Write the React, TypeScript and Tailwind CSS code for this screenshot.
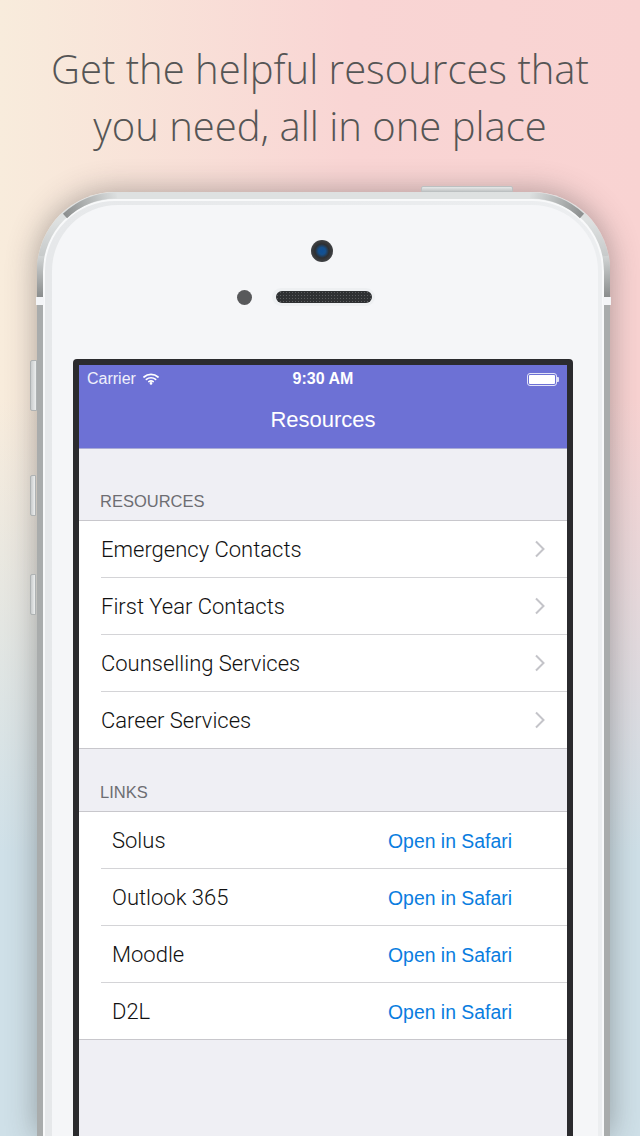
const resources = ["Emergency Contacts", "First Year Contacts", "Counselling Services", "Career Services"];
const links = ["Solus", "Outlook 365", "Moodle", "D2L"];

function Wifi() {
  return (
    <svg width="16" height="12" viewBox="0 0 16 12" fill="none" stroke="white" strokeWidth="1.7" strokeLinecap="round">
      <path d="M1 4 C5 0.4 11 0.4 15 4" />
      <path d="M3.4 6.4 C6 4.2 10 4.2 12.6 6.4" />
      <path d="M5.8 8.6 C7 7.7 9 7.7 10.2 8.6" />
      <circle cx="8" cy="10.4" r="1.3" fill="white" stroke="none" />
    </svg>
  );
}

function Battery() {
  return (
    <div className="flex items-center">
      <div className="w-[30px] h-[13px] rounded-[3px] border border-white/80 p-px">
        <div className="w-full h-full bg-white rounded-[1px]" />
      </div>
      <div className="w-[2px] h-[5px] bg-white/80 rounded-r-[1px]" />
    </div>
  );
}

function Chevron() {
  return (
    <svg width="12" height="18" viewBox="0 0 12 18" fill="none" stroke="#c4c4c9" strokeWidth="2">
      <path d="M2 1.5 L9.5 9 L2 16.5" />
    </svg>
  );
}

// chrome highlights round the top corners of the phone
function CornerChrome({ mirrored }: { mirrored?: boolean }) {
  const id = mirrored ? "r" : "l";
  return (
    <svg
      className={`absolute top-0 pointer-events-none ${mirrored ? "right-0 -scale-x-100" : "left-0"}`}
      width="100"
      height="106"
      viewBox="0 0 100 106"
      fill="none"
    >
      <defs>
        <linearGradient id={`a${id}`} gradientUnits="userSpaceOnUse" x1="28" y1="24" x2="82" y2="4">
          <stop offset="0" stopColor="#8c8f8f" />
          <stop offset="1" stopColor="#dfe2e2" />
        </linearGradient>
        <linearGradient id={`b${id}`} gradientUnits="userSpaceOnUse" x1="0" y1="60" x2="0" y2="105">
          <stop offset="0" stopColor="#d8dbdb" />
          <stop offset="1" stopColor="#8a8d8d" />
        </linearGradient>
      </defs>
      <path d="M28 24 A75 75 0 0 1 80 3.5" stroke={`url(#a${id})`} strokeWidth="6" />
      <path d="M4 64 Q3 72 3 80 L3 105" stroke={`url(#b${id})`} strokeWidth="6" />
    </svg>
  );
}

function SectionHeader({ label, height }: { label: string; height: string }) {
  return (
    <div className={`${height} flex items-end pl-[21px] pb-[9px] text-[16.5px] leading-5 text-[#6d6d72]`}>
      {label}
    </div>
  );
}

export default function App() {
  return (
    <div
      className="w-[640px] h-[1136px] overflow-hidden flex flex-col"
      style={{
        background:
          "linear-gradient(180deg, rgba(207,224,232,0) 35%, #cfe0e8 75%), linear-gradient(90deg, #f8ecdc 0%, #f9d5d4 55%, #f9d3d2 100%)",
      }}
    >
      {/* Headline */}
      <div className="h-[192px] pt-[40px] text-center text-[40px] leading-[57px] font-light text-[#555555] font-['Open_Sans',sans-serif]">
        <div>Get the helpful resources that</div>
        <div>you need, all in one place</div>
      </div>

      {/* Phone */}
      <div className="ml-[37px] w-[573px] flex-1 relative">
        {/* volume + silent buttons */}
        <div className="absolute left-[-7px] top-[168px] w-[7px] h-[51px] rounded-l-[2px] border border-[#aeb2b3] bg-gradient-to-r from-[#c9cccd] to-[#eceeee]" />
        <div className="absolute left-[-7px] top-[283px] w-[6px] h-[41px] rounded-l-[2px] border border-[#aeb2b3] bg-gradient-to-r from-[#c9cccd] to-[#eceeee]" />
        <div className="absolute left-[-7px] top-[382px] w-[6px] h-[41px] rounded-l-[2px] border border-[#aeb2b3] bg-gradient-to-r from-[#c9cccd] to-[#eceeee]" />
        {/* power button */}
        <div className="absolute left-[384px] top-[-6px] w-[92px] h-[6px] rounded-t-[2px] border border-[#bcc0c1] bg-gradient-to-b from-[#e6e8e8] to-[#c3c6c7]" />

        <div className="h-full rounded-t-[78px] px-[6px] pt-[7px] bg-gradient-to-b from-[#dee1e1] from-[3%] to-[#a9acac] to-[12%] shadow-[0_0_30px_rgba(60,60,60,0.42)]">
          <div className="h-full rounded-t-[72px] pl-[7px] pr-[4px] pt-[4px] bg-gradient-to-r from-[#e6e8ea] to-[#eceef0] border-l-2 border-r-2 border-t-2 border-[#f8f9fa]">
            <div className="h-full rounded-t-[66px] bg-[#f5f6f8] flex flex-col items-start">
              {/* Camera */}
              <div className="mt-[35px] ml-[259px] w-[22px] h-[22px] shrink-0 rounded-full bg-[radial-gradient(circle,#0f4f96_0%,#15518f_22%,#2e3033_45%,#55575a_100%)]" />
              {/* Mic + speaker */}
              <div className="mt-[26px] ml-[185px] flex items-center gap-[20px] shrink-0">
                <div className="w-[15px] h-[15px] rounded-full bg-[#58595b]" />
                <div className="w-[103px] h-[18px] rounded-full bg-[#eef0f2] flex items-center justify-center">
                  <div className="w-[96px] h-[12px] rounded-full bg-[#2f3133] bg-[radial-gradient(#5c5e60_0.8px,transparent_1px)] bg-[length:3px_3px]" />
                </div>
              </div>

              {/* Screen */}
              <div className="mt-[53px] ml-[21px] w-[500px] flex-1 rounded-t-[4px] bg-[#2b2b2e] px-[6px] pt-[6px] font-['Liberation_Sans',sans-serif]">
                <div className="h-full bg-[#efeff4] flex flex-col">
                  {/* Nav bar */}
                  <div className="h-[84px] shrink-0 bg-[#6d71d5] border-b border-[#a9abd6] text-white">
                    <div className="h-[28px] px-[8px] relative flex items-center justify-between text-[16px]">
                      <div className="flex items-center gap-[7px]">
                        <span className="text-white/90">Carrier</span>
                        <Wifi />
                      </div>
                      <span className="absolute left-0 right-0 text-center font-bold">9:30 AM</span>
                      <Battery />
                    </div>
                    <div className="text-center text-[22px] leading-[26px] mt-[14px]">Resources</div>
                  </div>

                  <SectionHeader label="RESOURCES" height="h-[71px]" />
                  <div className="bg-white border-y border-[#c8c7cc] font-['Roboto',sans-serif] font-light">
                    {resources.map((item, i) => (
                      <div key={item} className="pl-[22px]">
                        <div className={`pr-[21px] flex items-center justify-between text-[22px] text-[#111111] ${i < resources.length - 1 ? "h-[57px] border-b border-[#d4d4d7]" : "h-[56px]"}`}>
                          <span>{item}</span>
                          <Chevron />
                        </div>
                      </div>
                    ))}
                  </div>

                  <SectionHeader label="LINKS" height="h-[62px]" />
                  <div className="bg-white border-y border-[#c8c7cc] font-['Roboto',sans-serif] font-light">
                    {links.map((item, i) => (
                      <div key={item} className="pl-[22px]">
                        <div className={`pl-[11px] pr-[55px] flex items-center justify-between text-[22px] text-[#111111] ${i < links.length - 1 ? "h-[57px] border-b border-[#d4d4d7]" : "h-[56px]"}`}>
                          <span>{item}</span>
                          <span className="pt-[3px] text-[19.4px] font-normal font-['Liberation_Sans',sans-serif] text-[#0a7de0]">Open in Safari</span>
                        </div>
                      </div>
                    ))}
                  </div>
                </div>
              </div>
            </div>
          </div>
        </div>

        <CornerChrome />
        <CornerChrome mirrored />
        {/* antenna bands */}
        <div className="absolute left-[-1px] top-[105px] w-[8px] h-[8px] bg-[#f4f5f7]" />
        <div className="absolute right-[-1px] top-[105px] w-[8px] h-[8px] bg-[#f4f5f7]" />
      </div>
    </div>
  );
}
